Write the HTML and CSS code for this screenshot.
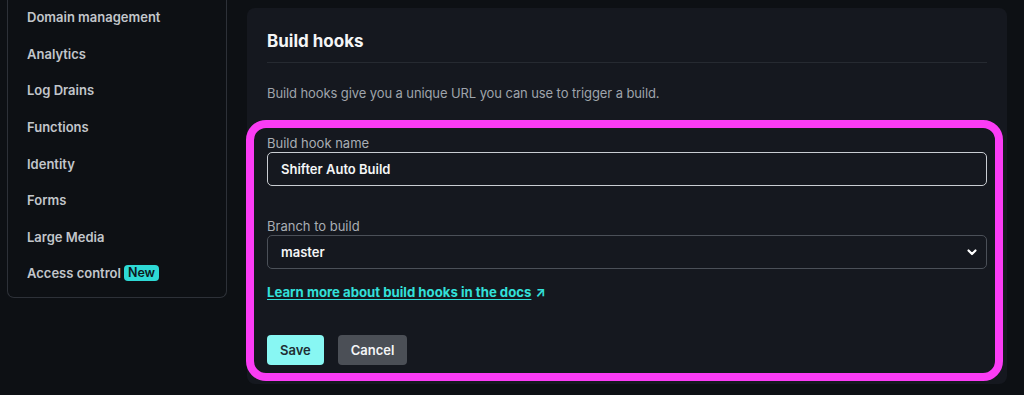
FILE: index.html
```html
<!DOCTYPE html>
<html lang="en">
<head>
  <meta charset="UTF-8">
  <meta name="viewport" content="width=device-width, initial-scale=1.0">
  <title>Build hooks</title>
  <link rel="stylesheet" href="styles.css">
</head>
<body>

  <div class="layout">
    <!-- Sidebar -->
    <nav class="sidebar">
      <a href="#" class="nav-item">Domain management</a>
      <a href="#" class="nav-item">Analytics</a>
      <a href="#" class="nav-item">Log Drains</a>
      <a href="#" class="nav-item">Functions</a>
      <a href="#" class="nav-item">Identity</a>
      <a href="#" class="nav-item">Forms</a>
      <a href="#" class="nav-item">Large Media</a>
      <a href="#" class="nav-item">Access control <span class="badge">New</span></a>
    </nav>

    <!-- Build hooks card -->
    <section class="card">
      <h2 class="card-title">Build hooks</h2>
      <p class="card-text">Build hooks give you a unique URL you can use to trigger a build.</p>

      <form class="hook-form">
        <div class="field">
          <label for="hookName">Build hook name</label>
          <input type="text" id="hookName" class="input input-focus" value="Shifter Auto Build">
        </div>

        <div class="field field-spaced">
          <label for="branch">Branch to build</label>
          <div class="select-wrap">
            <select id="branch" class="input">
              <option>master</option>
            </select>
            <svg class="chevron" width="12" height="12" viewBox="0 0 12 12"><path d="M2.5 4.5 6 8l3.5-3.5" fill="none" stroke="#fff" stroke-width="2.2" stroke-linecap="round" stroke-linejoin="round"/></svg>
          </div>
        </div>

        <a href="#" class="docs-link"><span class="docs-text">Learn more about build hooks in the docs</span> <span class="arrow">↗</span></a>

        <div class="actions">
          <button type="button" class="btn btn-save">Save</button>
          <button type="button" class="btn btn-cancel">Cancel</button>
        </div>
      </form>
    </section>
  </div>

</body>
</html>
```

FILE: styles.css
```css
/* General */
body {
  margin: 0;
  background: #0d1014;
  font-family: Inter, "Noto Sans", sans-serif;
  font-size: 13px;
  color: #e6e8ea;
}

.layout {
  display: flex;
  align-items: flex-start;
  gap: 20px;
  padding-left: 7px;
}

/* Sidebar */
.sidebar {
  width: 180px;
  display: flex;
  flex-direction: column;
  padding: 0 19px 5px;
  margin-top: -1px;
  border: 1px solid #2d3138;
  border-top: none;
  border-radius: 0 0 7px 7px;
}
.nav-item {
  display: flex;
  align-items: center;
  gap: 3px;
  padding: 8.3px 0;
  line-height: 20px;
  color: #c2c6cb;
  font-weight: 600;
  text-decoration: none;
  white-space: nowrap;
}
.badge {
  background: #2ed9d5;
  color: #0d1a1c;
  font-size: 12.5px;
  font-weight: 600;
  line-height: 16px;
  padding: 0 4px;
  border-radius: 4px;
}

/* Card */
.card {
  width: 720px;
  margin-top: 8px;
  padding: 20px 20px 3px;
  background: #15181f;
  border-radius: 8px;
}
.card-title {
  margin: 0;
  padding-bottom: 8px;
  border-bottom: 1px solid #262a31;
  font-size: 17px;
  line-height: 26px;
  font-weight: 700;
  color: #f4f5f6;
}
.card-text {
  margin: 20px 0 17px;
  line-height: 20px;
  color: #9fa4ab;
  letter-spacing: -0.1px;
}

/* Highlighted form */
.hook-form {
  margin: 0 -16px 0 -21px;
  padding: 6px 8px 8px 13px;
  border: 8px solid #fb3cf5;
  border-radius: 20px;
}
.field label {
  display: block;
  line-height: 18px;
  color: #a9aeb4;
}
.field-spaced {
  margin-top: 31px;
}
.input {
  box-sizing: border-box;
  width: 100%;
  height: 34px;
  padding: 0 13px;
  background: #15181f;
  border: 1px solid #4b5058;
  border-radius: 5px;
  color: #f4f5f6;
  font-family: inherit;
  font-size: 13px;
  font-weight: 600;
  outline: none;
  -webkit-appearance: none;
  appearance: none;
}
.input-focus {
  border-color: #c9cdd2;
}
.select-wrap {
  position: relative;
}
.chevron {
  position: absolute;
  right: 9px;
  top: 11px;
}

.docs-link {
  display: inline-block;
  margin-top: 13px;
  line-height: 20px;
  font-size: 13.2px;
  color: #32e0da;
  font-weight: 700;
  text-decoration: none;
}
.docs-text {
  text-decoration: underline;
  text-underline-offset: 2px;
}
.arrow {
  font-size: 13px;
  margin-left: 1px;
}

/* Buttons */
.actions {
  display: flex;
  gap: 14px;
  margin-top: 33px;
}
.btn {
  height: 30px;
  padding: 0 13px;
  border: none;
  border-radius: 4px;
  font-family: inherit;
  font-size: 13px;
  font-weight: 600;
  cursor: pointer;
}
.btn-save {
  background: #88f7f3;
  color: #1f2e33;
}
.btn-cancel {
  background: #4b4f56;
  color: #f4f5f6;
}
```
